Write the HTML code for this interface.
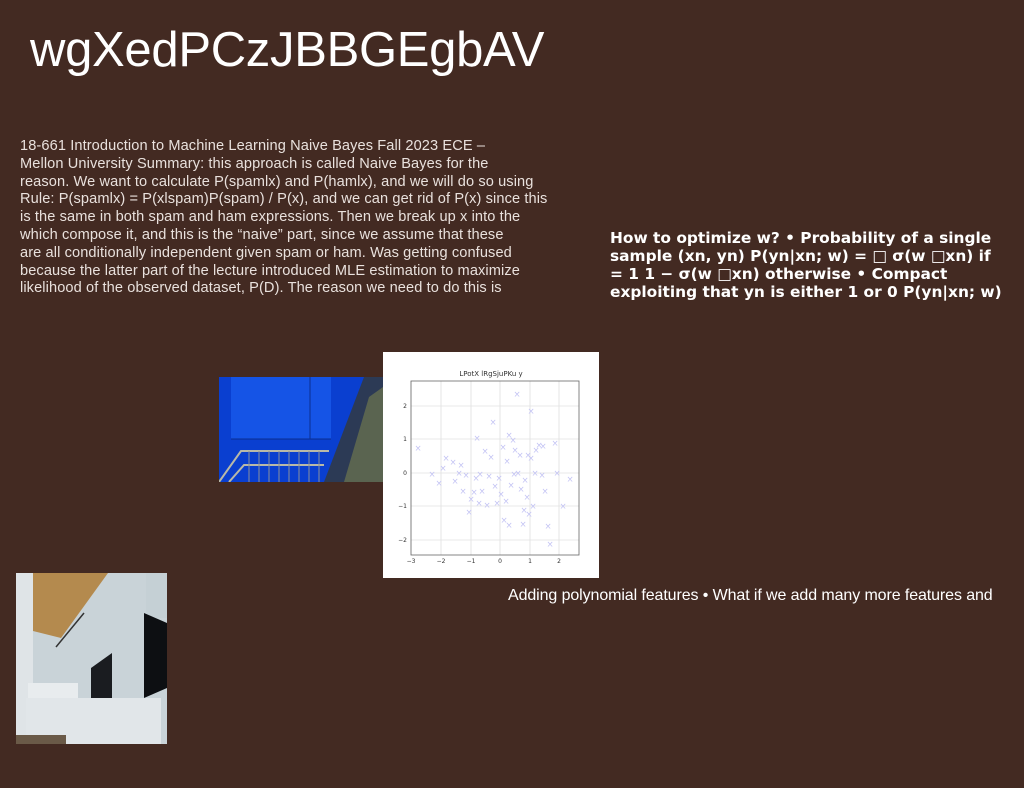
<!DOCTYPE html>
<html><head><meta charset="utf-8"><style>
body{margin:0;width:1024px;height:788px;background:#432a22;position:relative;overflow:hidden;font-family:"Liberation Sans",sans-serif;color:#fff}
.a{position:absolute}
#t{left:30px;top:22px;font-size:49px;line-height:56px;letter-spacing:-0.3px}
#p{left:20px;top:138px;font-size:14.6px;line-height:17.8px;color:#e9e1dd;white-space:nowrap;letter-spacing:0.1px}
#r{left:610px;top:229px;font-family:"DejaVu Sans",sans-serif;font-weight:bold;font-size:15.4px;line-height:18px;white-space:nowrap}
#c{left:508px;top:587px;font-size:16px;white-space:nowrap;letter-spacing:-0.1px}
</style></head><body>
<div class="a" id="t">wgXedPCzJBBGEgbAV</div>
<div class="a" id="p">18-661 Introduction to Machine Learning Naive Bayes Fall 2023 ECE –<br>Mellon University Summary: this approach is called Naive Bayes for the<br>reason. We want to calculate P(spamlx) and P(hamlx), and we will do so using<br>Rule: P(spamlx) = P(xlspam)P(spam) / P(x), and we can get rid of P(x) since this<br>is the same in both spam and ham expressions. Then we break up x into the<br>which compose it, and this is the “naive” part, since we assume that these<br>are all conditionally independent given spam or ham. Was getting confused<br>because the latter part of the lecture introduced MLE estimation to maximize<br>likelihood of the observed dataset, P(D). The reason we need to do this is</div>
<div class="a" id="r">How to optimize w? • Probability of a single<br>sample (xn, yn) P(yn|xn; w) = □ σ(w □xn) if<br>= 1 1 − σ(w □xn) otherwise • Compact<br>exploiting that yn is either 1 or 0 P(yn|xn; w)</div>
<div class="a" id="c">Adding polynomial features • What if we add many more features and</div>

<svg class="a" style="left:219px;top:377px" width="164" height="105" viewBox="0 0 164 105">
<rect width="164" height="105" fill="#0a3fd0"/>
<rect x="12" y="0" width="100" height="62" fill="#1554e6"/>
<line x1="91" y1="0" x2="91" y2="62" stroke="#0a2e90"/>
<line x1="12" y1="62" x2="112" y2="62" stroke="#0a2e90"/>
<path d="M0 105 L22 74 L110 74 M10 105 L25 88 L105 88" stroke="#b9b9a8" stroke-width="2" fill="none"/>
<g stroke="#8a8f9a" stroke-width="1">
<line x1="30" y1="74" x2="30" y2="105"/><line x1="40" y1="74" x2="40" y2="105"/><line x1="50" y1="74" x2="50" y2="105"/><line x1="60" y1="74" x2="60" y2="105"/><line x1="70" y1="74" x2="70" y2="105"/><line x1="80" y1="74" x2="80" y2="105"/><line x1="90" y1="74" x2="90" y2="105"/><line x1="100" y1="74" x2="100" y2="105"/></g>
<polygon points="145,0 164,0 164,105 105,105" fill="#2c3a55"/>
<polygon points="150,20 164,10 164,105 125,105" fill="#5a6450"/>
</svg>

<svg class="a" style="left:16px;top:573px" width="151" height="171" viewBox="0 0 151 171">
<rect width="151" height="171" fill="#c9d3d8"/>
<polygon points="17,0 92,0 45,65 17,58" fill="#b48a4e"/>
<rect x="0" y="0" width="17" height="171" fill="#dfe4e7"/>
<rect x="130" y="0" width="21" height="45" fill="#c5d0d5"/>
<polygon points="128,40 151,50 151,115 128,125" fill="#0d0f12"/>
<polygon points="75,95 96,80 96,143 75,143" fill="#1a1c20"/>
<rect x="12" y="110" width="50" height="30" fill="#e8ecee"/>
<rect x="10" y="125" width="135" height="46" fill="#e1e6e9"/>
<rect x="0" y="162" width="50" height="9" fill="#6a5a48"/>
<line x1="40" y1="74" x2="68" y2="40" stroke="#333" stroke-width="1.5"/>
</svg>

<svg class="a" style="left:383px;top:352px" width="216" height="226" viewBox="0 0 216 226" font-family="DejaVu Sans,sans-serif">
<rect width="216" height="226" fill="#fff"/>
<text x="108" y="24" font-size="7" text-anchor="middle" fill="#333">LPotX lRgSjuPKu y</text>
<g stroke="#e0e0e0" stroke-width="0.8">
<line x1="28" y1="29" x2="28" y2="203"/><line x1="58" y1="29" x2="58" y2="203"/><line x1="88" y1="29" x2="88" y2="203"/><line x1="117" y1="29" x2="117" y2="203"/><line x1="147" y1="29" x2="147" y2="203"/><line x1="176" y1="29" x2="176" y2="203"/>
<line x1="28" y1="54" x2="196" y2="54"/><line x1="28" y1="87" x2="196" y2="87"/><line x1="28" y1="121" x2="196" y2="121"/><line x1="28" y1="154" x2="196" y2="154"/><line x1="28" y1="188" x2="196" y2="188"/></g>
<rect x="28" y="29" width="168" height="174" fill="none" stroke="#666" stroke-width="0.8"/>
<g font-size="6" fill="#333" text-anchor="middle">
<text x="28" y="211">−3</text><text x="58" y="211">−2</text><text x="88" y="211">−1</text><text x="117" y="211">0</text><text x="147" y="211">1</text><text x="176" y="211">2</text></g>
<g font-size="6" fill="#333" text-anchor="end">
<text x="24" y="56">2</text><text x="24" y="89">1</text><text x="24" y="123">0</text><text x="24" y="156">−1</text><text x="24" y="190">−2</text></g>
<g fill="#c4c4f4" font-size="8.5" text-anchor="middle">
<text x="35" y="99">×</text><text x="49" y="125">×</text><text x="56" y="134">×</text><text x="60" y="119">×</text><text x="63" y="109">×</text><text x="70" y="113">×</text><text x="72" y="132">×</text><text x="76" y="124">×</text><text x="78" y="116">×</text><text x="80" y="142">×</text><text x="83" y="126">×</text><text x="86" y="163">×</text><text x="88" y="150">×</text><text x="91" y="143">×</text><text x="93" y="129">×</text><text x="94" y="89">×</text><text x="96" y="154">×</text><text x="97" y="125">×</text><text x="99" y="142">×</text><text x="102" y="102">×</text><text x="104" y="156">×</text><text x="106" y="127">×</text><text x="108" y="108">×</text><text x="110" y="73">×</text><text x="112" y="137">×</text><text x="114" y="154">×</text><text x="116" y="129">×</text><text x="118" y="145">×</text><text x="120" y="98">×</text><text x="121" y="171">×</text><text x="123" y="152">×</text><text x="124" y="112">×</text><text x="126" y="176">×</text><text x="128" y="136">×</text><text x="130" y="91">×</text><text x="131" y="125">×</text><text x="132" y="101">×</text><text x="134" y="45">×</text><text x="135" y="124">×</text><text x="137" y="106">×</text><text x="138" y="140">×</text><text x="140" y="175">×</text><text x="142" y="131">×</text><text x="144" y="148">×</text><text x="145" y="106">×</text><text x="146" y="165">×</text><text x="148" y="109">×</text><text x="150" y="157">×</text><text x="152" y="124">×</text><text x="153" y="101">×</text><text x="156" y="96">×</text><text x="159" y="126">×</text><text x="160" y="97">×</text><text x="162" y="142">×</text><text x="165" y="177">×</text><text x="167" y="195">×</text><text x="172" y="94">×</text><text x="174" y="124">×</text><text x="180" y="157">×</text><text x="187" y="130">×</text><text x="148" y="62">×</text><text x="126" y="86">×</text><text x="141" y="161">×</text></g>
</svg>
</body></html>
